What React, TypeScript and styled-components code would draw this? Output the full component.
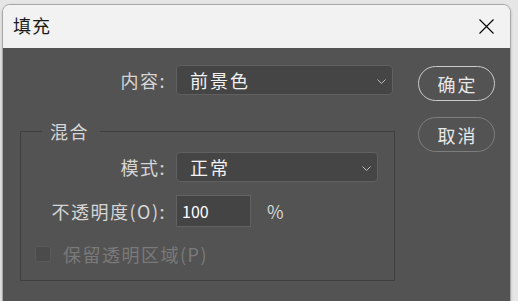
import React from 'react';
import styled, { createGlobalStyle } from 'styled-components';

const GlobalStyle = createGlobalStyle`
  html, body {
    margin: 0;
    padding: 0;
    background: #e6e6e6;
  }
  body {
    font-family: "Noto Sans CJK SC", "Noto Sans", sans-serif;
  }
`;

const Page = styled.div`
  padding: 4px 0 0 2px;
`;

const Window = styled.div`
  width: 509px;
  box-sizing: border-box;
  border: 1px solid #a8a8a8;
  border-radius: 8px;
  overflow: hidden;
  box-shadow: 0 1px 3px rgba(0, 0, 0, 0.18);
`;

const TitleBar = styled.div`
  height: 43px;
  background: #f2f2f2;
  display: flex;
  align-items: center;
  justify-content: space-between;
  padding: 0 16px 0 10px;
`;

const Title = styled.span`
  font-size: 18px;
  letter-spacing: 1px;
  color: #1b1b1b;
  margin-top: -3px;
`;

const CloseButton = styled.button`
  width: 15px;
  height: 15px;
  padding: 0;
  border: none;
  background: none;
  display: flex;
  color: #000;
`;

const Body = styled.div`
  height: 247px;
  background: #535353;
  display: flex;
  gap: 23px;
  padding: 17px 15px 0 17px;
`;

const FormColumn = styled.div`
  width: 375px;
  display: flex;
  flex-direction: column;
`;

const ButtonColumn = styled.div`
  display: flex;
  flex-direction: column;
  gap: 16px;
  padding-top: 1px;
`;

const FieldRow = styled.div<{ $labelWidth: number; $height: number }>`
  display: grid;
  grid-template-columns: ${p => p.$labelWidth}px auto auto 1fr;
  align-items: center;
  column-gap: 10px;
  height: ${p => p.$height}px;
`;

const Label = styled.label`
  text-align: right;
  font-size: 18px;
  letter-spacing: 1.5px;
  color: #d6d6d6;
  white-space: nowrap;
`;

const Select = styled.div<{ $width: number }>`
  width: ${p => p.$width}px;
  height: 30px;
  box-sizing: border-box;
  background: #454545;
  border: 1px solid #606060;
  border-radius: 4px;
  display: flex;
  align-items: center;
  justify-content: space-between;
  padding: 0 6px 0 13px;
  font-size: 18px;
  letter-spacing: 2px;
  color: #f2f2f2;
`;

const Chevron = styled.svg`
  width: 9px;
  height: 5px;
  margin-top: 3px;
`;

const NumberInput = styled.div`
  width: 75px;
  height: 32px;
  box-sizing: border-box;
  background: #444444;
  border: 1px solid #626262;
  display: flex;
  align-items: center;
  padding-left: 5px;
  font-size: 16px;
  color: #ffffff;
`;

const Unit = styled.span`
  font-size: 18px;
  color: #d6d6d6;
  margin-left: 6px;
`;

const Group = styled.fieldset`
  margin: 24px 0 0;
  padding: 9px 16px 14px 14px;
  border: 1px solid #3f3f3f;
  display: flex;
  flex-direction: column;
  gap: 13px;
  min-width: 0;
`;

const Legend = styled.legend`
  margin-left: 7px;
  padding: 0 11px 0 8px;
  font-size: 18px;
  line-height: 24px;
  letter-spacing: 1.5px;
  color: #d6d6d6;
`;

const CheckRow = styled.div`
  display: flex;
  align-items: center;
  gap: 12px;
  height: 24px;
  margin-top: 2px;
`;

const CheckBox = styled.span`
  width: 16px;
  height: 16px;
  box-sizing: border-box;
  background: #4b4b4b;
  border: 1px solid #5a5a5a;
  border-radius: 2px;
`;

const DisabledLabel = styled.span`
  font-size: 18px;
  letter-spacing: 1.5px;
  color: #7a7a7a;
`;

const PillButton = styled.button<{ $primary?: boolean }>`
  width: 77px;
  height: 35px;
  border-radius: 18px;
  background: transparent;
  border: 1.5px solid ${p => (p.$primary ? '#cbcbcb' : '#7d7d7d')};
  color: #e8e8e8;
  font-family: inherit;
  font-size: 18px;
  letter-spacing: 2px;
  padding: 0 0 0 2px;
`;

const ChevronIcon = () => (
  <Chevron viewBox="0 0 9 5">
    <path d="M0.5 0.5 L4.5 4.5 L8.5 0.5" fill="none" stroke="#bdbdbd" strokeWidth="1" />
  </Chevron>
);

export default function App() {
  return (
    <Page>
      <GlobalStyle />
      <Window>
        <TitleBar>
          <Title>填充</Title>
          <CloseButton aria-label="关闭">
            <svg width="15" height="15" viewBox="0 0 15 15">
              <path d="M0.5 0.5 L14.5 14.5 M14.5 0.5 L0.5 14.5" stroke="#000" strokeWidth="1.1" />
            </svg>
          </CloseButton>
        </TitleBar>
        <Body>
          <FormColumn>
            <FieldRow $labelWidth={146} $height={30}>
              <Label>内容:</Label>
              <Select $width={217}>
                <span>前景色</span>
                <ChevronIcon />
              </Select>
            </FieldRow>
            <Group>
              <Legend>混合</Legend>
              <FieldRow $labelWidth={131} $height={30}>
                <Label>模式:</Label>
                <Select $width={202}>
                  <span>正常</span>
                  <ChevronIcon />
                </Select>
              </FieldRow>
              <FieldRow $labelWidth={131} $height={32}>
                <Label>不透明度(O):</Label>
                <NumberInput>100</NumberInput>
                <Unit>%</Unit>
              </FieldRow>
              <CheckRow>
                <CheckBox />
                <DisabledLabel>保留透明区域(P)</DisabledLabel>
              </CheckRow>
            </Group>
          </FormColumn>
          <ButtonColumn>
            <PillButton $primary>确定</PillButton>
            <PillButton>取消</PillButton>
          </ButtonColumn>
        </Body>
      </Window>
    </Page>
  );
}
